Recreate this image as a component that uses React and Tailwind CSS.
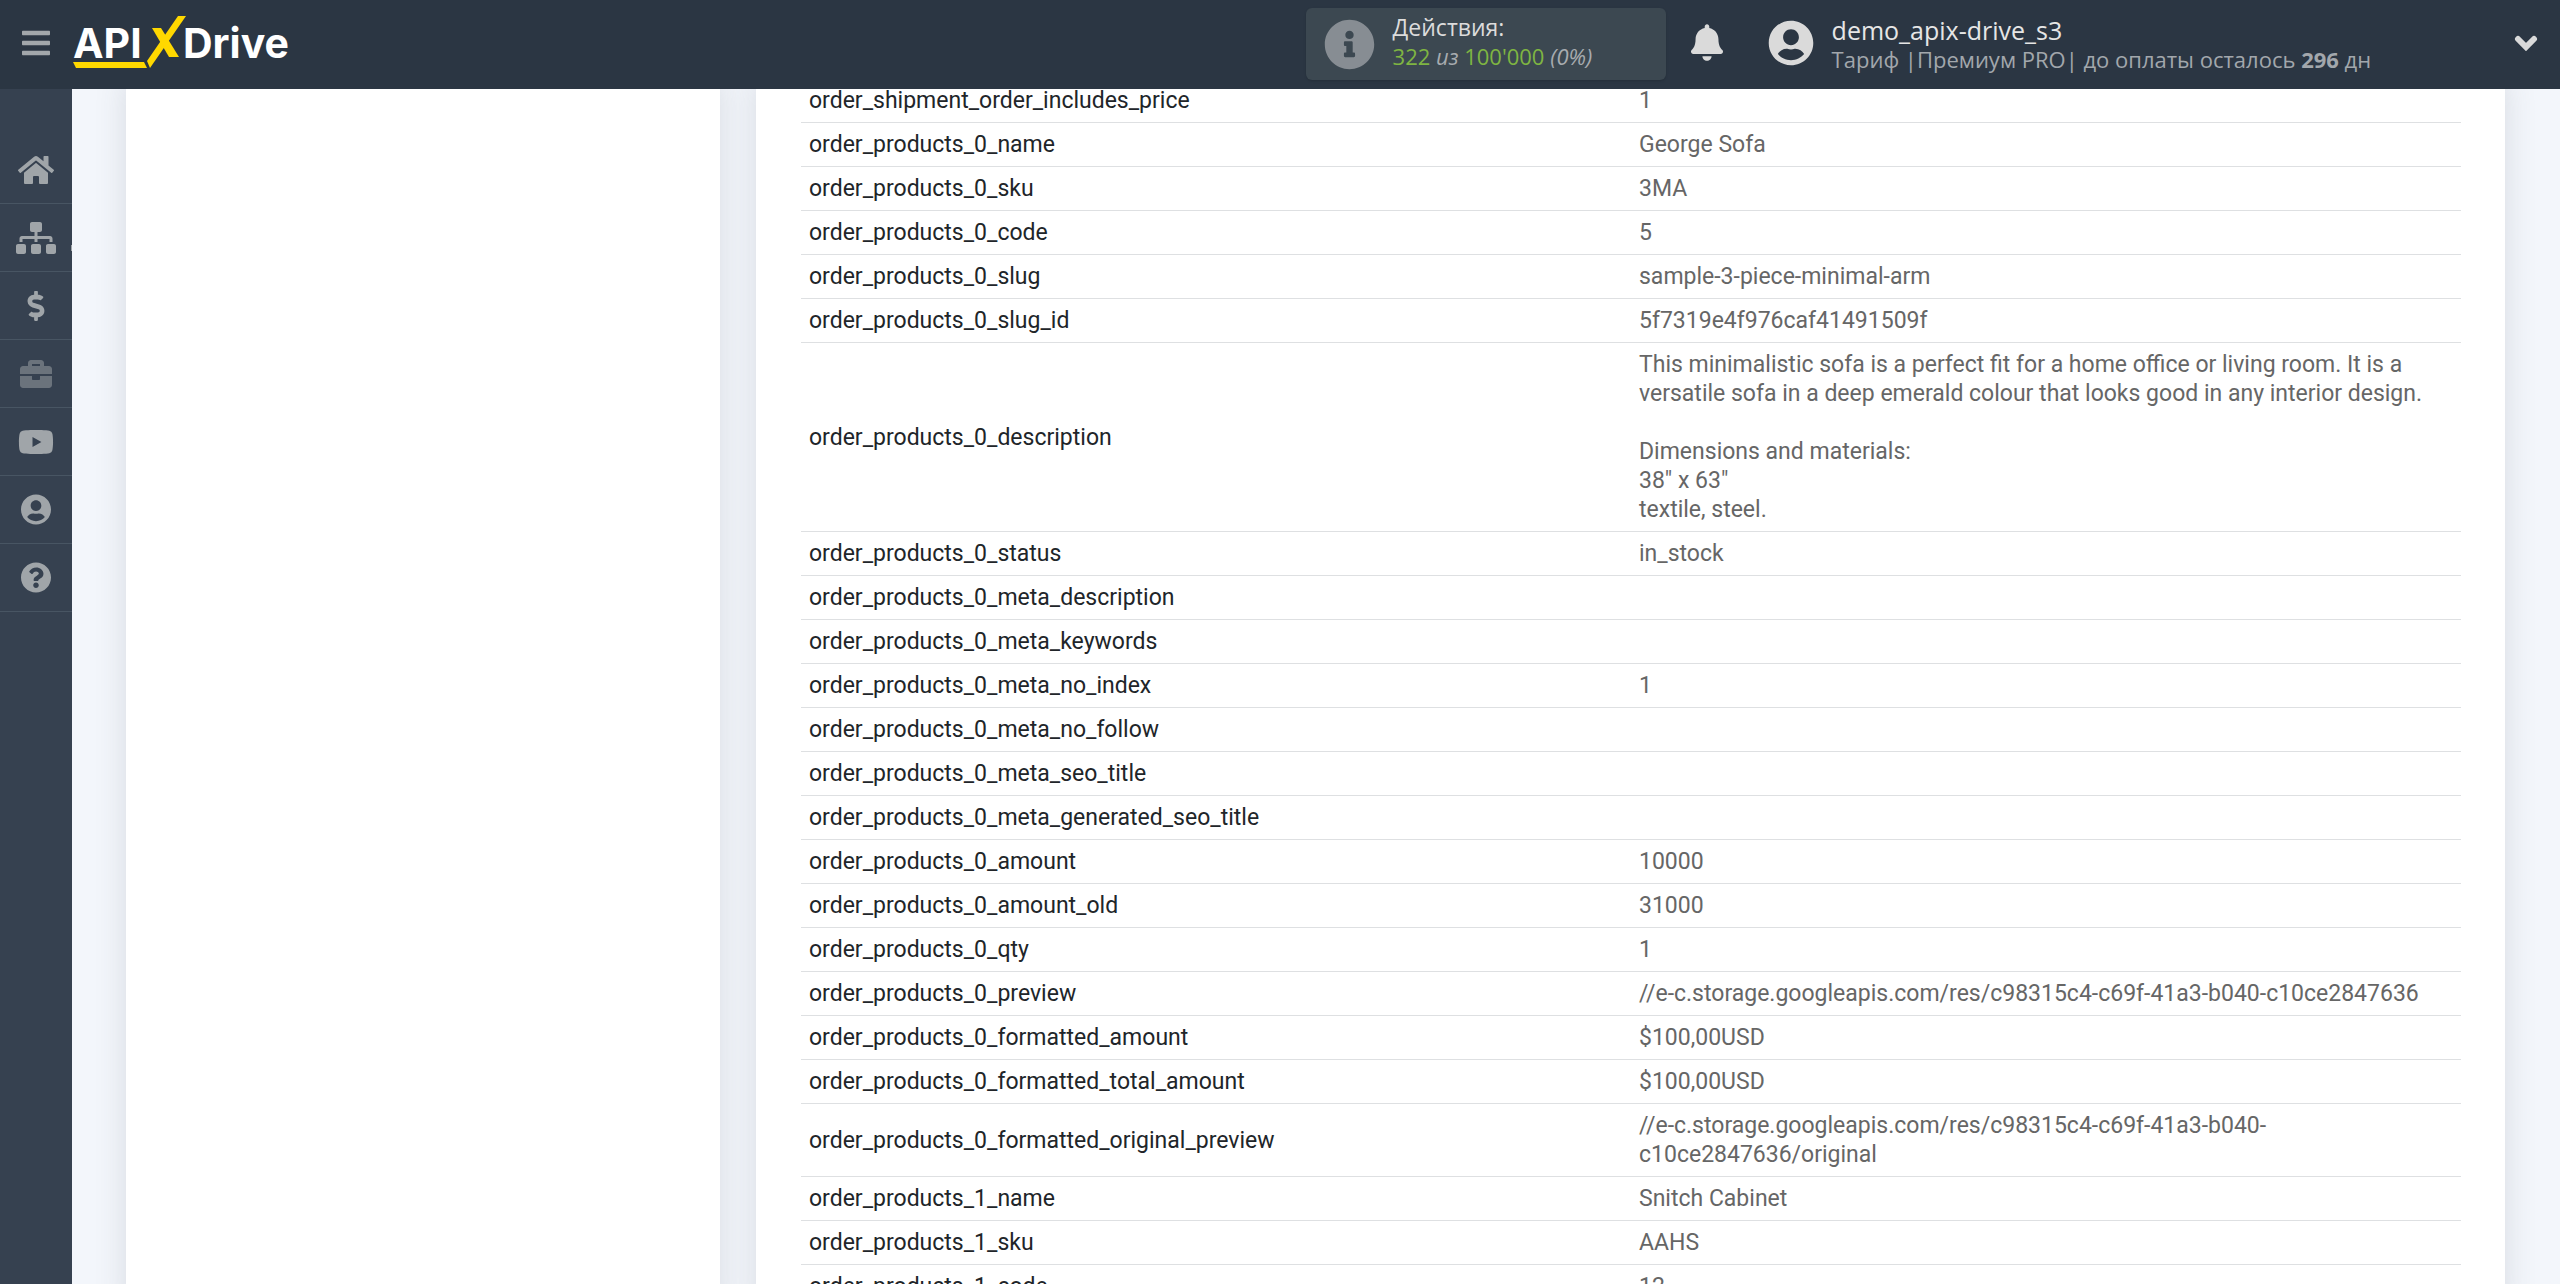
import React from 'react';
import {
  FaBars,
  FaBell,
  FaBriefcase,
  FaDollarSign,
  FaHome,
  FaInfoCircle,
  FaQuestionCircle,
  FaSitemap,
  FaUserCircle,
  FaYoutube,
} from 'react-icons/fa';

const menuItems = [
  { label: 'Главная', icon: FaHome, iconClass: 'w-9 h-8' },
  { label: 'Связи', icon: FaSitemap, iconClass: 'w-10 h-8', marker: true },
  { label: 'Оплата', icon: FaDollarSign, iconClass: 'w-8 h-[30px]' },
  { label: 'Проекты', icon: FaBriefcase, iconClass: 'w-8 h-8 opacity-50' },
  { label: 'Видео', icon: FaYoutube, iconClass: 'w-9 h-9' },
  { label: 'Профиль', icon: FaUserCircle, iconClass: 'w-8 h-[31px]' },
  { label: 'Помощь', icon: FaQuestionCircle, iconClass: 'w-8 h-[31px]' },
];

const fields = [
  ['order_shipment_order_includes_price', '1'],
  ['order_products_0_name', 'George Sofa'],
  ['order_products_0_sku', '3MA'],
  ['order_products_0_code', '5'],
  ['order_products_0_slug', 'sample-3-piece-minimal-arm'],
  ['order_products_0_slug_id', '5f7319e4f976caf41491509f'],
  [
    'order_products_0_description',
    'This minimalistic sofa is a perfect fit for a home office or living room. It is a versatile sofa in a deep emerald colour that looks good in any interior design.\n\nDimensions and materials:\n38" x 63"\ntextile, steel.',
  ],
  ['order_products_0_status', 'in_stock'],
  ['order_products_0_meta_description', ''],
  ['order_products_0_meta_keywords', ''],
  ['order_products_0_meta_no_index', '1'],
  ['order_products_0_meta_no_follow', ''],
  ['order_products_0_meta_seo_title', ''],
  ['order_products_0_meta_generated_seo_title', ''],
  ['order_products_0_amount', '10000'],
  ['order_products_0_amount_old', '31000'],
  ['order_products_0_qty', '1'],
  ['order_products_0_preview', '//e-c.storage.googleapis.com/res/c98315c4-c69f-41a3-b040-c10ce2847636'],
  ['order_products_0_formatted_amount', '$100,00USD'],
  ['order_products_0_formatted_total_amount', '$100,00USD'],
  [
    'order_products_0_formatted_original_preview',
    '//e-c.storage.googleapis.com/res/c98315c4-c69f-41a3-b040-c10ce2847636/original',
  ],
  ['order_products_1_name', 'Snitch Cabinet'],
  ['order_products_1_sku', 'AAHS'],
  ['order_products_1_code', '12'],
];

const Logo = () => (
  <a
    href="#"
    aria-label="APIXDrive"
    className="relative flex items-center h-14 font-['Inter'] font-bold text-[41px] leading-[56px] text-white"
  >
    <span className="w-[110px]">API</span>
    <span>Drive</span>
    {/* Жёлтая галочка-X и подчёркивание */}
    <svg viewBox="0 0 114 54" className="absolute left-0 top-0 w-[114px] h-[54px]" fill="#ffd800">
      <path d="M0 47h71l3 6H3z" />
      <path d="M105 1h8L77 53l-3-7z" />
      <path d="M79 13h9l18 29H96z" />
    </svg>
  </a>
);

const Header = () => (
  <header className="relative z-20 flex items-center h-[89px] shrink-0 pb-1 bg-[#2b3643] font-['Open_Sans',sans-serif]">
    <div className="flex items-center w-[51%] pl-[22px]">
      <button type="button" aria-label="Меню" className="mr-[23px] text-[#a2a7ab]">
        <FaBars className="w-7 h-8" />
      </button>
      <Logo />
    </div>

    {/* Счётчик действий */}
    <div className="flex items-center self-start w-[360px] h-[72px] mt-2 pl-[18px] rounded-md bg-[#3c4851] shadow">
      <FaInfoCircle className="w-[51px] h-[51px] mr-[18px] text-[#878d93]" />
      <div className="pb-1 text-[22px] leading-[29px]">
        <div className="text-[23px] text-[#dcdcdc]">Действия:</div>
        <div className="text-[#7fb542]">
          322 <i className="text-[#a7abaf]">из</i> 100'000 <i className="text-[#a7abaf]">(0%)</i>
        </div>
      </div>
    </div>

    <button type="button" aria-label="Уведомления" className="ml-[25px] text-[#dadada]">
      <FaBell className="w-8 h-[37px]" />
    </button>

    <button type="button" className="flex items-center flex-1 ml-[45px] pr-[22px] text-left">
      <FaUserCircle className="w-[46px] h-[46px] mr-[18px] text-[#dadada]" />
      <span className="flex-1 pt-1">
        <span className="block text-[25px] leading-[29px] text-[#e6e6e6]">demo_apix-drive_s3</span>
        <span className="block text-[22px] leading-[29px] text-[#a2a7ac]">
          Тариф |Премиум PRO| до оплаты осталось <b>296</b> дн
        </span>
      </span>
      <svg viewBox="0 0 24 16" className="w-6 h-4" fill="none" stroke="#dadada" strokeWidth="6" strokeLinecap="round">
        <path d="M4 4l8 8 8-8" />
      </svg>
    </button>
  </header>
);

const Sidebar = () => (
  <nav className="relative z-10 w-[72px] shrink-0 pt-[47px] bg-[#364150]">
    <ul>
      {menuItems.map(({ label, icon: Icon, iconClass, marker }) => (
        <li key={label} className="relative h-[68px] border-b border-[#485563]">
          <a href="#" aria-label={label} className="flex items-center justify-center h-full text-[#a0a5a9]">
            <Icon className={iconClass} />
          </a>
          {marker && <span className="absolute right-0 bottom-5 w-px h-1.5 bg-[#a0a5a9]" />}
        </li>
      ))}
    </ul>
  </nav>
);

const FieldsTable = () => (
  <table className="w-full table-fixed text-[23px] leading-[29px]">
    <tbody>
      {fields.map(([name, value]) => (
        <tr key={name} className="border-b border-[#dee0e2]">
          <th scope="row" className="px-2 py-[7px] text-left font-normal text-[#212529]">
            {name}
          </th>
          <td className="px-2 py-[7px] whitespace-pre-line text-[#666]">{value}</td>
        </tr>
      ))}
    </tbody>
  </table>
);

const App = () => (
  <div className="flex flex-col h-screen overflow-hidden bg-[#f3f6fb] font-['Roboto',sans-serif]">
    <Header />
    <div className="flex flex-1 min-h-0">
      <Sidebar />
      <main className="grid flex-1 grid-cols-[594fr_1749fr] gap-9 pl-[54px] pr-[55px]">
        <section className="-mt-[10px] bg-white shadow-[0_0_30px_rgba(60,70,80,0.15)]" />
        <section className="-mt-[10px] pl-[45px] pr-11 bg-white shadow-[0_0_30px_rgba(60,70,80,0.15)]">
          <FieldsTable />
        </section>
      </main>
    </div>
  </div>
);

export default App;
